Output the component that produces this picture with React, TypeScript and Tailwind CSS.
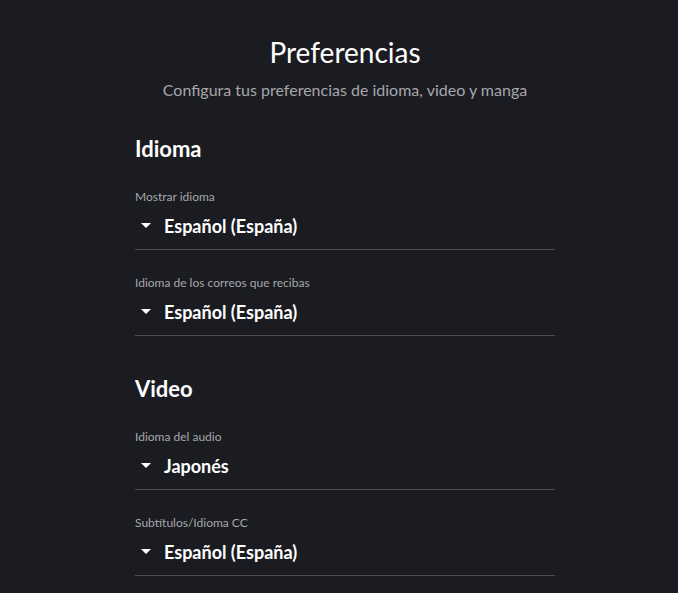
import { ReactNode } from "react"

const fontStack = "font-['Lato','Noto_Sans',sans-serif]"

function Caret() {
  return (
    <svg width="10" height="6" viewBox="0 0 10 6" className="shrink-0">
      <path d="M0 0 L10 0 L5 5 Z" fill="#ffffff" />
    </svg>
  )
}

function SelectField({ label, value }: { label: string; value: string }) {
  return (
    <div className="flex flex-col">
      <span className="text-[12px] leading-[16px] text-[#a6a7ab]">{label}</span>
      <div className="flex items-center gap-[13px] pl-[6px] pt-[9px] pb-[11px] border-b border-[#4b4c52]">
        <Caret />
        <span className="text-[18px] leading-[24px] font-bold text-white">{value}</span>
      </div>
    </div>
  )
}

function Section({ title, children }: { title: string; children: ReactNode }) {
  return (
    <section className="flex flex-col">
      <h2 className="text-[22px] leading-[28px] font-bold text-white mb-[26px]">{title}</h2>
      <div className="flex flex-col gap-[25px]">{children}</div>
    </section>
  )
}

export default function App() {
  return (
    <div className={`min-h-screen bg-[#1b1c21] ${fontStack} pl-[12px]`}>
      <div className="w-[420px] mx-auto pt-[34px] flex flex-col">
        <header className="flex flex-col items-center">
          <h1 className="text-[28px] leading-[36px] text-white">Preferencias</h1>
          <p className="mt-[10px] text-[16px] leading-[20px] text-[#a6a7ab] whitespace-nowrap">
            Configura tus preferencias de idioma, video y manga
          </p>
        </header>

        <div className="mt-[35px] flex flex-col gap-[39px]">
          <Section title="Idioma">
            <SelectField label="Mostrar idioma" value="Español (España)" />
            <SelectField label="Idioma de los correos que recibas" value="Español (España)" />
          </Section>
          <Section title="Video">
            <SelectField label="Idioma del audio" value="Japonés" />
            <SelectField label="Subtítulos/Idioma CC" value="Español (España)" />
          </Section>
        </div>
      </div>
    </div>
  )
}
